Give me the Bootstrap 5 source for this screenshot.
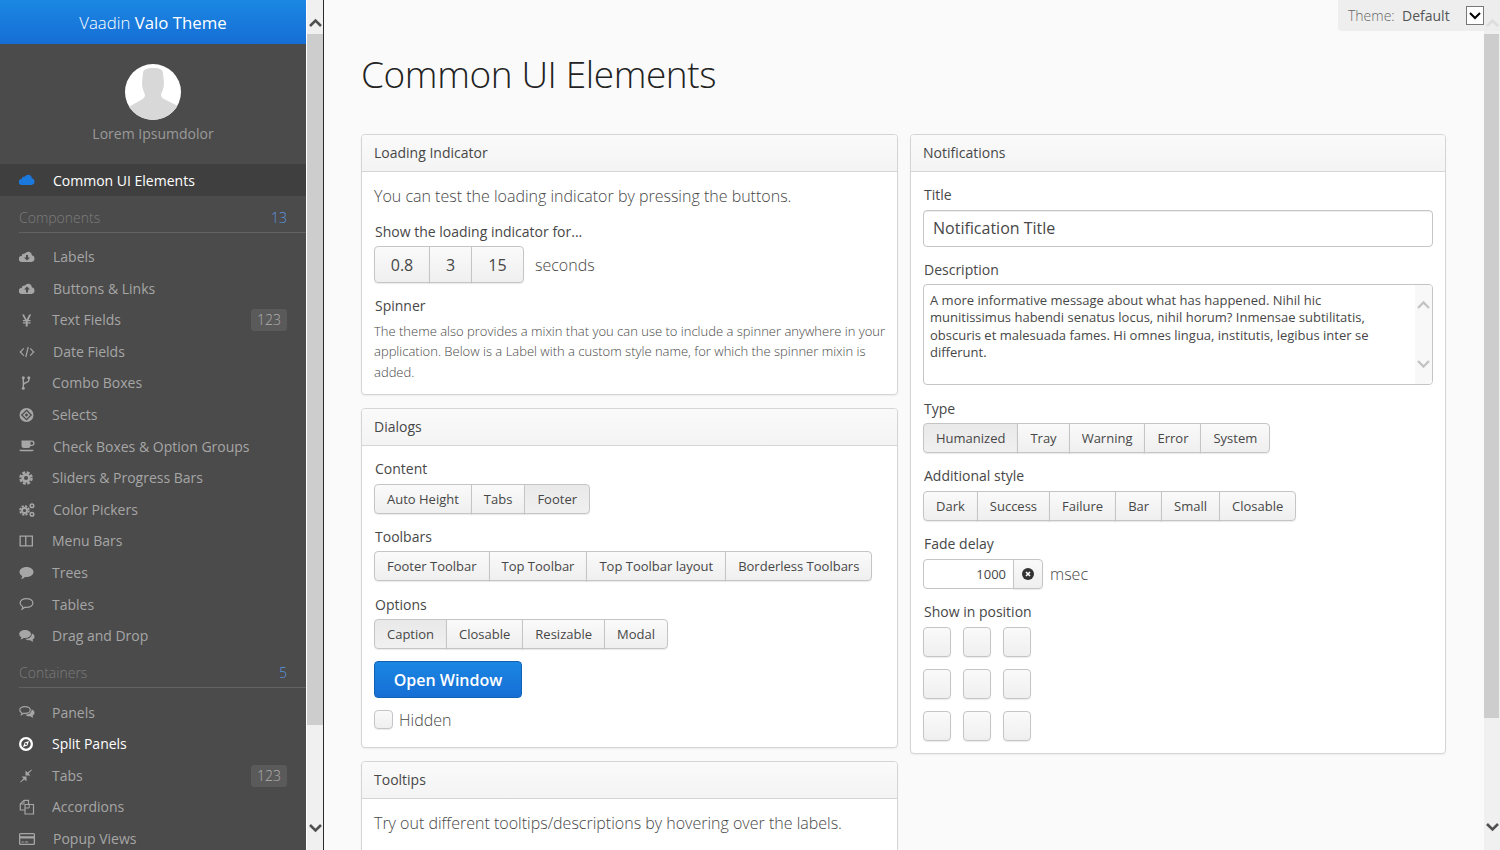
<!DOCTYPE html>
<html lang="en">
<head>
<meta charset="UTF-8">
<title>Vaadin Valo Theme</title>
<link rel="stylesheet" href="https://cdn.jsdelivr.net/npm/bootstrap@5.3.0/dist/css/bootstrap.min.css">
<style>
    html, body { height: 850px; overflow: hidden; }
    body { font-family: "Open Sans", "Liberation Sans", sans-serif; font-size: 14px; color: #474747; background: #fafafa; }

    .side-menu { width: 306px; height: 850px; overflow: hidden; background: #4b4b4b; color: #a6a6a6; flex: none; }
    .side-head { height: 44px; background: linear-gradient(#1b87e3, #166ed5); color: #fff; font-size: 16.8px; line-height: 46px; text-align: center; }
    .side-head span { font-weight: 300; }
    .side-user { height: 120px; padding-top: 20px; text-align: center; color: #9a9a9a; }
    .side-user svg { display: block; margin: 0 auto 2px; }
    .side-user div { line-height: 22px; padding-top: 1px; }
    .side-row { height: 31.58px; padding-left: 19px; padding-right: 19px; line-height: 31.58px; }
    .side-row.is-open { background: #3f3f3f; color: #fff; line-height: 33px; height: 31.6px; }
    .side-row.is-lit { color: #fff; }
    .side-ico { width: 34px; flex: none; display: flex; align-items: center; }
    .side-ico.tight { width: 33px; }
    .side-ico svg { width: 16px; height: 16px; fill: currentColor; }
    .side-sect { height: 37.4px; margin-left: 19px; padding-right: 19px; padding-top: 10px; border-bottom: 1px solid #626262; line-height: 24px; color: #7c7c7c; font-weight: 300; margin-bottom: 8.2px; }
    .side-sect.sect-two { margin-top: -.7px; }
    .side-sect b { font-weight: 300; color: #5b97e0; }
    .side-tag { background: #5a5a5a; color: #b0b0b0; border-radius: 3px; line-height: 22px; height: 22px; padding: 0 6px; font-weight: 300; }

    .fake-scroll { width: 17px; height: 850px; background: #f0f0f0; flex: none; }
    .fake-scroll .arrow { height: 34px; }
    .fake-scroll .thumb { background: #cdcdcd; margin: 0 1px; }
    .fake-scroll svg { width: 15px; height: 34px; margin-left: 1px; display: block; fill: none; stroke: #505050; stroke-width: 2.6; }
    .scroll-side { border-right: 1px solid #2b2b2b; width: 18px; border-left: 1px solid #fff; }
    .scroll-side .thumb { height: 691px; margin: 0; }
    .scroll-main { width: 16px; }
    .scroll-main .thumb { height: 684px; margin: 0 1px 0 0; }

    .page-body { padding: 0 37px; height: 850px; overflow: hidden; position: relative; min-width: 0; }
    .page-title { font-size: 37px; font-weight: 300; line-height: 50px; color: #222; margin: 49px 0 35px; letter-spacing: -.4px; }
    .board { display: grid; grid-template-columns: 537px 536px; column-gap: 12px; align-items: start; }
    .stack { display: flex; flex-direction: column; gap: 13px; }

    .theme-bar { position: absolute; top: 0; right: 0; width: 162px; height: 31px; background: rgba(236,236,236,.9); border-bottom-left-radius: 4px; display: flex; align-items: center; padding-left: 10px; z-index: 3; }
    .theme-bar .lbl { font-weight: 300; color: #666; width: 54px; }
    .theme-bar .val { color: #555; width: 64px; }
    .theme-bar .drop { width: 18px; height: 19px; background: #fff; border: 1px solid #777; }
    .theme-bar svg { display: block; width: 16px; height: 17px; fill: none; stroke: #000; stroke-width: 2; }

    .panel-box { border-color: #d5d5d5; border-radius: 4px; box-shadow: 0 1px 2px rgba(0,0,0,.06); --bs-card-inner-border-radius: 3px; background: #fff; }
    .panel-box .card-header { height: 37px; padding: 0 12px; line-height: 36px; color: #474747; background: linear-gradient(#fafafa, #f4f4f4); border-bottom-color: #d5d5d5; }
    .panel-box .card-body { padding: 12px 12px 0; }
    .lead-note { font-size: 16px; font-weight: 300; line-height: 25px; color: #474747; margin: 0; }
    .fld-cap { line-height: 20px; margin-left: 1px; color: #474747; }
    .btn-valo { height: 30px; padding: 0 12px; font-size: 13px; line-height: 28px; color: #474747; background: linear-gradient(#fafafa, #efefef); border: 1px solid #c5c5c5; border-radius: 4px; box-shadow: 0 1px 1px rgba(0,0,0,.08); --bs-btn-hover-bg: #f4f4f4; }
    .btn-group > .btn-valo:not(:first-child) { margin-left: -1px; }
    .btn-valo.is-on { background: linear-gradient(#e9e9e9, #f0f0f0); }
    .btn-big { height: 37px; line-height: 36px; font-size: 16px; }
    .cap-gap { margin-top: 13px; margin-bottom: 5px; }
    .note-small { font-size: 13px; font-weight: 300; line-height: 20.4px; color: #474747; margin: 0 -4px 0 0; }
    .btn-main { width: 148px; height: 37px; background: linear-gradient(#1b87e3, #166ed5); border: 1px solid #1362b1; color: #fff; font-size: 16px; font-weight: 600; line-height: 36px; padding: 0; border-radius: 4px; }
    .unit-txt { font-size: 16px; font-weight: 300; margin-left: 11px; }
    .fake-check { width: 19px; height: 19px; border: 1px solid #c5c5c5; border-radius: 4px; background: linear-gradient(#fafafa, #efefef); box-shadow: 0 1px 1px rgba(0,0,0,.08); margin-right: 6px; }

    .input-title { height: 37px; font-size: 16px; padding: 0 9px 2px; border-color: #c5c5c5; border-radius: 4px; color: #474747; box-shadow: inset 0 1px 0 #eee; }
    .area-wrap { height: 101px; border: 1px solid #c5c5c5; border-radius: 4px; background: #fff; overflow: hidden; }
    .area-wrap .txt { padding: 7px 6px; font-size: 13px; line-height: 17.4px; width: 462px; color: #474747; }
    .area-wrap .bar { width: 17px; background: #f8f8f8; margin-left: auto; }
    .area-wrap svg { width: 17px; height: 22px; fill: none; stroke: #c4c4c4; stroke-width: 2.4; display: block; }
    .num-field { width: 91px; height: 30px; border: 1px solid #c5c5c5; border-radius: 4px 0 0 4px; text-align: right; padding: 0 7px; font-size: 13px; line-height: 29px; background: #fff; }
    .num-clear { width: 30px; height: 30px; padding: 0; margin-left: -1px; border-radius: 0 4px 4px 0; }
    .num-clear svg { width: 12px; height: 12px; display: block; margin: 0 auto; }
    .pos-grid { display: grid; grid-template-columns: repeat(3, 28px); column-gap: 12px; row-gap: 12px; padding-bottom: 12px; }
    .pos-grid .btn-valo { width: 28px; padding: 0; }
</style>
</head>
<body class="d-flex">

<svg width="0" height="0" class="position-absolute">
    <symbol id="i-cloud" viewBox="0 0 16 16"><path d="M12.900 6.300A3.700 3.700 0 0 0 6 4.600a2.600 2.600 0 0 0-3.300 2.500A2.700 2.700 0 0 0 2.700 13h9.800a3.400 3.400 0 0 0 .4-6.700z"/></symbol>
    <symbol id="i-down" viewBox="0 0 16 16"><path fill-rule="evenodd" d="M12.900 6.300A3.700 3.700 0 0 0 6 4.600a2.600 2.600 0 0 0-3.300 2.500A2.700 2.700 0 0 0 2.700 13h9.800a3.400 3.400 0 0 0 .4-6.700zM7 6h2v2.600h2L8 11.600 5 8.600h2z"/></symbol>
    <symbol id="i-up" viewBox="0 0 16 16"><path fill-rule="evenodd" d="M12.900 6.300A3.700 3.700 0 0 0 6 4.600a2.600 2.600 0 0 0-3.300 2.500A2.700 2.700 0 0 0 2.700 13h9.800a3.400 3.400 0 0 0 .4-6.700zM8 5.600l3 3H9v2.800H7V8.600H5z"/></symbol>
    <symbol id="i-yen" viewBox="0 0 16 16"><path d="M3 2.500h2L7.600 7.600 10.200 2.500h2L9.500 8h2v1.300H8.700v1h2.800v1.300H8.700v2.900h-2v-2.900H3.900v-1.300h2.800v-1H3.900V8h2.100z"/></symbol>
    <symbol id="i-code" viewBox="0 0 16 16"><path d="M4.800 4.400 1.300 8l3.500 3.600M11.200 4.400 14.700 8l-3.500 3.600M9.200 3 6.800 13" fill="none" stroke="currentColor" stroke-width="1.200"/></symbol>
    <symbol id="i-fork" viewBox="0 0 16 16"><path d="M4.300 3v10.500M9.800 3v2.400c0 2.200-5.300 2-5.300 4.300" fill="none" stroke="currentColor" stroke-width="1.400"/><circle cx="4.300" cy="2.800" r="1.500"/><circle cx="9.800" cy="2.800" r="1.500"/><circle cx="4.300" cy="13.300" r="1.500"/></symbol>
    <symbol id="i-select" viewBox="0 0 16 16"><circle cx="7.500" cy="8" r="7"/><path d="M7.500 3.300 12.200 8 7.500 12.700 2.800 8z" fill="none" stroke="#4b4b4b" stroke-width="1.300"/><path d="M7.500 6.200 9.300 8 7.500 9.800 5.700 8z" fill="#4b4b4b"/></symbol>
    <symbol id="i-coffee" viewBox="0 0 16 16"><path fill-rule="evenodd" d="M2.500 2.500h10.300a2.500 2.500 0 0 1 0 5.500h-1.300a2.300 2.300 0 0 1-2.300 2H5a2.500 2.500 0 0 1-2.500-2.500zM11.500 3.800v3h1.200a1.500 1.500 0 0 0 0-3zM.5 11.700h14v.6c0 .6-1 1-2 1h-10c-1 0-2-.4-2-1z"/></symbol>
    <symbol id="i-cog" viewBox="0 0 16 16"><circle cx="7" cy="8" r="4.700"/><circle cx="7" cy="8" r="5.600" fill="none" stroke="currentColor" stroke-width="2.400" stroke-dasharray="2.900 1.500"/><circle cx="7" cy="8" r="2" fill="#4b4b4b"/></symbol>
    <symbol id="i-cogs" viewBox="0 0 16 16"><circle cx="5.500" cy="8.500" r="3.500"/><circle cx="5.500" cy="8.500" r="4.400" fill="none" stroke="currentColor" stroke-width="1.800" stroke-dasharray="2.200 1.250"/><circle cx="5.500" cy="8.500" r="1.600" fill="#4b4b4b"/><circle cx="13" cy="3.800" r="1.800" fill="none" stroke="currentColor" stroke-width="1.500"/><circle cx="13" cy="12.200" r="1.800" fill="none" stroke="currentColor" stroke-width="1.500"/></symbol>
    <symbol id="i-cols" viewBox="0 0 16 16"><path fill-rule="evenodd" d="M.5 2.500H14v11H.5zM1.800 3.800v8.400h4.300V3.800zm5.600 0v8.400h5.300V3.800z"/></symbol>
    <symbol id="i-comment" viewBox="0 0 16 16"><path d="M7.500 2c3.900 0 7 2.200 7 5s-3.100 5-7 5c-.5 0-1 0-1.500-.1C5 13 3.500 13.800 1.800 14c.8-.8 1.300-1.700 1.400-3C1.500 10 .5 8.600.5 7c0-2.800 3.100-5 7-5z"/></symbol>
    <symbol id="i-comment-o" viewBox="0 0 16 16"><path d="M7.500 2.600c3.500 0 6.400 1.900 6.400 4.400s-2.900 4.400-6.400 4.400c-.6 0-1.200 0-1.700-.2-.8 1-1.700 1.600-2.700 2 .4-.7.6-1.500.6-2.500C2.200 9.900 1.100 8.500 1.100 7c0-2.500 2.900-4.400 6.400-4.400z" fill="none" stroke="currentColor" stroke-width="1.200"/></symbol>
    <symbol id="i-comments" viewBox="0 0 16 16"><path d="M6 2c3.300 0 6 1.800 6 4s-2.700 4-6 4H4.700c-.9.900-1.900 1.300-3.200 1.500.5-.7.900-1.300.9-2.200C1 8.500.2 7.300.2 6 .2 3.800 2.700 2 6 2z"/><path d="M12.900 5.500c1.700.7 2.600 1.900 2.600 3.200 0 1.200-.7 2.200-1.900 2.900 0 .9.400 1.500.9 2.200-1.300-.2-2.300-.6-3.200-1.500-1.900.2-3.900-.3-5-1.500 3.800.2 6.800-2 6.600-5.800z"/></symbol>
    <symbol id="i-comments-o" viewBox="0 0 16 16"><path d="M6 2.600c3 0 5.300 1.500 5.300 3.400S9 9.400 6 9.400H4.500c-.7.700-1.300 1-2 1.200.3-.5.400-1 .4-1.600C1.600 8.300.8 7.200.8 6c0-1.900 2.300-3.400 5.200-3.400z" fill="none" stroke="currentColor" stroke-width="1.200"/><path d="M12.700 5.600c1.800.6 2.800 1.800 2.800 3.100 0 1.200-.7 2.200-1.900 2.900 0 .9.400 1.500.9 2.200-1.300-.2-2.300-.6-3.200-1.500-1.900.2-3.900-.3-5-1.500 3.800.2 6.400-2 6.400-5.700z"/></symbol>
    <symbol id="i-compass" viewBox="0 0 16 16"><path fill-rule="evenodd" d="M7 1a7 7 0 1 1 0 14A7 7 0 0 1 7 1zm0 2.300a4.700 4.700 0 1 0 0 9.400 4.700 4.700 0 0 0 0-9.400zM10 5 8.400 9.400 4 11l1.600-4.400zM7 7a1 1 0 1 0 0 2 1 1 0 0 0 0-2z"/></symbol>
    <symbol id="i-compress" viewBox="0 0 16 16"><path d="M12.500 1.500l.5.500-3.500 3.500 2 2h-5v-5l2 2zM1.500 14.500 1 14l3.500-3.500-2-2h5v5l-2-2z"/></symbol>
    <symbol id="i-copy" viewBox="0 0 16 16"><path d="M6 5.500h8.500V15H6zM6 11H1.300V5L5 1.300h4.500V5" fill="none" stroke="currentColor" stroke-width="1.200"/><path d="M5 1.500V5H1.500M10.200 5.500V9h-4" fill="none" stroke="currentColor"/></symbol>
    <symbol id="i-card" viewBox="0 0 16 16"><path fill-rule="evenodd" d="M1.500 2h13A1.500 1.500 0 0 1 16 3.500v9a1.500 1.500 0 0 1-1.500 1.500h-13A1.500 1.500 0 0 1 0 12.500v-9A1.500 1.500 0 0 1 1.500 2zM1.300 7.500v5c0 .2 0 .2.200.2h13c.2 0 .2 0 .2-.2v-5zm0-4v1.700h13.400V3.500c0-.2 0-.2-.2-.2h-13c-.2 0-.2 0-.2.200zM2.500 10.500h2.300v1H2.500zm3.300 0h3.400v1H5.800z"/></symbol>
</svg>

<!-- left menu -->
<nav class="side-menu">
    <div class="side-head"><span>Vaadin</span> Valo Theme</div>
    <div class="side-user">
        <svg width="56" height="56" viewBox="0 0 56 56">
            <clipPath id="ava"><circle cx="28" cy="28" r="28"/></clipPath>
            <circle cx="28" cy="28" r="28" fill="#fff"/>
            <path clip-path="url(#ava)" fill="#d8d8d8" d="M18 9c0-3 3-5 10-5s10 2 10 5l1 10c0 5-2 9-3 11 0 3 1 4 3 5l14 7v20H0V45l16-9c3-2 4-3 4-5-1-3-3-7-3-12z"/>
        </svg>
        <div>Lorem Ipsumdolor</div>
    </div>

    <div class="side-row is-open d-flex"><span class="side-ico"><svg style="color:#1b78dc"><use href="#i-cloud"/></svg></span>Common UI Elements</div>

    <div class="side-sect d-flex justify-content-between">Components <b>13</b></div>
    <div class="side-row d-flex"><span class="side-ico"><svg><use href="#i-down"/></svg></span>Labels</div>
    <div class="side-row d-flex"><span class="side-ico"><svg><use href="#i-up"/></svg></span>Buttons &amp; Links</div>
    <div class="side-row d-flex"><span class="side-ico tight"><svg><use href="#i-yen"/></svg></span>Text Fields<span class="side-tag ms-auto my-auto">123</span></div>
    <div class="side-row d-flex"><span class="side-ico"><svg><use href="#i-code"/></svg></span>Date Fields</div>
    <div class="side-row d-flex"><span class="side-ico tight"><svg><use href="#i-fork"/></svg></span>Combo Boxes</div>
    <div class="side-row d-flex"><span class="side-ico tight"><svg><use href="#i-select"/></svg></span>Selects</div>
    <div class="side-row d-flex"><span class="side-ico"><svg><use href="#i-coffee"/></svg></span>Check Boxes &amp; Option Groups</div>
    <div class="side-row d-flex"><span class="side-ico tight"><svg><use href="#i-cog"/></svg></span>Sliders &amp; Progress Bars</div>
    <div class="side-row d-flex"><span class="side-ico"><svg><use href="#i-cogs"/></svg></span>Color Pickers</div>
    <div class="side-row d-flex"><span class="side-ico tight"><svg><use href="#i-cols"/></svg></span>Menu Bars</div>
    <div class="side-row d-flex"><span class="side-ico tight"><svg><use href="#i-comment"/></svg></span>Trees</div>
    <div class="side-row d-flex"><span class="side-ico tight"><svg><use href="#i-comment-o"/></svg></span>Tables</div>
    <div class="side-row d-flex"><span class="side-ico tight"><svg><use href="#i-comments"/></svg></span>Drag and Drop</div>

    <div class="side-sect sect-two d-flex justify-content-between">Containers <b>5</b></div>
    <div class="side-row d-flex"><span class="side-ico tight"><svg><use href="#i-comments-o"/></svg></span>Panels</div>
    <div class="side-row is-lit d-flex"><span class="side-ico tight"><svg><use href="#i-compass"/></svg></span>Split Panels</div>
    <div class="side-row d-flex"><span class="side-ico tight"><svg><use href="#i-compress"/></svg></span>Tabs<span class="side-tag ms-auto my-auto">123</span></div>
    <div class="side-row d-flex"><span class="side-ico tight"><svg><use href="#i-copy"/></svg></span>Accordions</div>
    <div class="side-row d-flex"><span class="side-ico"><svg><use href="#i-card"/></svg></span>Popup Views</div>
</nav>

<div class="fake-scroll scroll-side">
    <div class="arrow"><svg viewBox="0 0 15 34"><path d="M2 26l5.500-5.500L13 26"/></svg></div>
    <div class="thumb"></div>
    <div class="arrow" style="margin-top:92px"><svg viewBox="0 0 15 34"><path d="M2 8l5.500 5.500L13 8"/></svg></div>
</div>

<!-- main view -->
<main class="page-body flex-grow-1">
    <h1 class="page-title">Common UI Elements</h1>
    <div class="board">
        <div class="stack">
            <div class="card panel-box">
                <div class="card-header">Loading Indicator</div>
                <div class="card-body">
                    <p class="lead-note">You can test the loading indicator by pressing the buttons.</p>
                    <div class="fld-cap" style="margin-top:13px;margin-bottom:4px">Show the loading indicator for...</div>
                    <div class="d-flex align-items-center">
                        <div class="btn-group">
                            <button class="btn btn-valo btn-big" style="width:56px">0.8</button>
                            <button class="btn btn-valo btn-big" style="width:43px">3</button>
                            <button class="btn btn-valo btn-big" style="width:53px">15</button>
                        </div>
                        <span class="unit-txt">seconds</span>
                    </div>
                    <div class="fld-cap" style="margin-top:13px;margin-bottom:5px">Spinner</div>
                    <p class="note-small" style="padding-bottom:11.3px">The theme also provides a mixin that you can use to include a spinner anywhere in your application. Below is a Label with a custom style name, for which the spinner mixin is added.</p>
                </div>
            </div>

            <div class="card panel-box">
                <div class="card-header">Dialogs</div>
                <div class="card-body">
                    <div class="fld-cap" style="margin-top:1px;margin-bottom:5px">Content</div>
                    <div class="btn-group">
                        <button class="btn btn-valo">Auto Height</button>
                        <button class="btn btn-valo">Tabs</button>
                        <button class="btn btn-valo is-on">Footer</button>
                    </div>
                    <div class="fld-cap" style="margin-top:13px;margin-bottom:4px">Toolbars</div>
                    <div class="btn-group">
                        <button class="btn btn-valo">Footer Toolbar</button>
                        <button class="btn btn-valo">Top Toolbar</button>
                        <button class="btn btn-valo">Top Toolbar layout</button>
                        <button class="btn btn-valo">Borderless Toolbars</button>
                    </div>
                    <div class="fld-cap" style="margin-top:14px;margin-bottom:4px">Options</div>
                    <div class="btn-group">
                        <button class="btn btn-valo is-on">Caption</button>
                        <button class="btn btn-valo">Closable</button>
                        <button class="btn btn-valo">Resizable</button>
                        <button class="btn btn-valo">Modal</button>
                    </div>
                    <div style="margin-top:12px"><button class="btn btn-main">Open Window</button></div>
                    <div class="d-flex align-items-center" style="margin-top:10px;padding-bottom:15px">
                        <span class="fake-check"></span><span class="unit-txt ms-0">Hidden</span>
                    </div>
                </div>
            </div>

            <div class="card panel-box">
                <div class="card-header">Tooltips</div>
                <div class="card-body">
                    <p class="lead-note" style="padding-bottom:40px">Try out different tooltips/descriptions by hovering over the labels.</p>
                </div>
            </div>
        </div>

        <div class="card panel-box">
            <div class="card-header">Notifications</div>
            <div class="card-body pt-0">
                <div class="fld-cap" style="margin-top:13px;margin-bottom:5px">Title</div>
                <input class="form-control input-title" value="Notification Title">
                <div class="fld-cap" style="margin-top:13px;margin-bottom:4px">Description</div>
                <div class="area-wrap d-flex">
                    <div class="txt">A more informative message about what has happened. Nihil hic munitissimus habendi senatus locus, nihil horum? Inmensae subtilitatis, obscuris et malesuada fames. Hi omnes lingua, institutis, legibus inter se differunt.</div>
                    <div class="bar d-flex flex-column justify-content-between py-2">
                        <svg viewBox="0 0 17 22"><path d="M3 15l5.500-5.500L14 15"/></svg>
                        <svg viewBox="0 0 17 22"><path d="M3 7l5.500 5.500L14 7"/></svg>
                    </div>
                </div>
                <div class="fld-cap" style="margin-top:14px;margin-bottom:4px">Type</div>
                <div class="btn-group">
                    <button class="btn btn-valo is-on">Humanized</button>
                    <button class="btn btn-valo">Tray</button>
                    <button class="btn btn-valo">Warning</button>
                    <button class="btn btn-valo">Error</button>
                    <button class="btn btn-valo">System</button>
                </div>
                <div class="fld-cap cap-gap">Additional style</div>
                <div class="btn-group">
                    <button class="btn btn-valo">Dark</button>
                    <button class="btn btn-valo">Success</button>
                    <button class="btn btn-valo">Failure</button>
                    <button class="btn btn-valo">Bar</button>
                    <button class="btn btn-valo">Small</button>
                    <button class="btn btn-valo">Closable</button>
                </div>
                <div class="fld-cap cap-gap">Fade delay</div>
                <div class="d-flex align-items-center">
                    <div class="num-field">1000</div>
                    <button class="btn btn-valo num-clear"><svg viewBox="0 0 12 12"><circle cx="6" cy="6" r="6" fill="#333"/><path d="M4 4l4 4M8 4l-4 4" stroke="#fff" stroke-width="1.600"/></svg></button>
                    <span class="unit-txt" style="margin-left:7px">msec</span>
                </div>
                <div class="fld-cap cap-gap">Show in position</div>
                <div class="pos-grid">
                    <button class="btn btn-valo"></button><button class="btn btn-valo"></button><button class="btn btn-valo"></button>
                    <button class="btn btn-valo"></button><button class="btn btn-valo"></button><button class="btn btn-valo"></button>
                    <button class="btn btn-valo"></button><button class="btn btn-valo"></button><button class="btn btn-valo"></button>
                </div>
            </div>
        </div>
    </div>
</main>

<div class="fake-scroll scroll-main">
    <div class="arrow"><svg viewBox="0 0 15 34"><path d="M2 26l5.500-5.500L13 26"/></svg></div>
    <div class="thumb"></div>
    <div class="arrow" style="margin-top:98px"><svg viewBox="0 0 15 34"><path d="M2 8l5.500 5.500L13 8"/></svg></div>
</div>

<div class="theme-bar">
    <span class="lbl">Theme:</span><span class="val">Default</span>
    <span class="drop"><svg viewBox="0 0 16 17"><path d="M3 6l5 5 5-5"/></svg></span>
</div>

</body>
</html>
